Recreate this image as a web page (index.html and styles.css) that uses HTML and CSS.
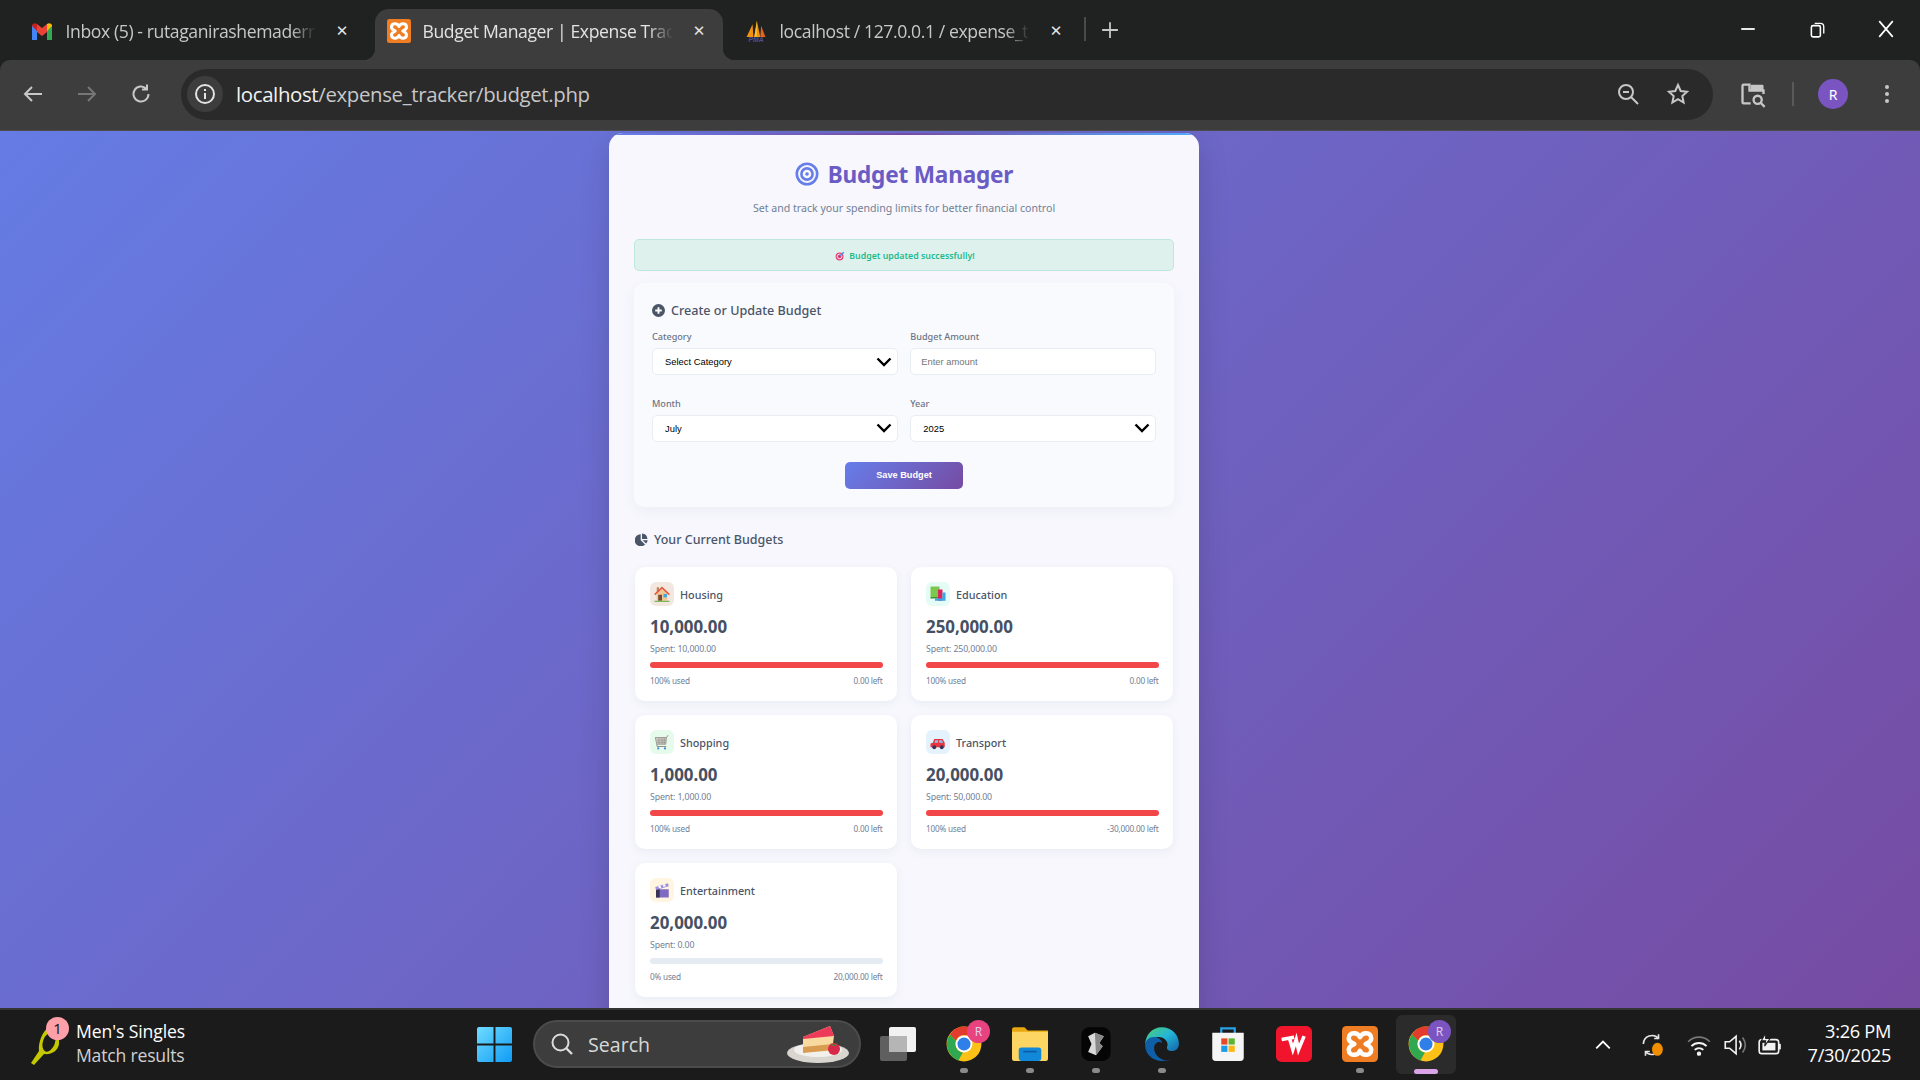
FILE: index.html
```html
<!DOCTYPE html>
<html lang="en">
<head>
    <meta charset="UTF-8">
    <meta name="viewport" content="width=device-width, initial-scale=1.0">
    <title>Budget Manager | Expense Tracker</title>
    <link rel="stylesheet" href="styles.css">
</head>
<body>
    <div class="tabstrip">
        <div class="tab">
            <svg class="favicon" viewBox="0 0 24 24"><path fill="#4285f4" d="M2 21V6l5 4v11z"/><path fill="#34a853" d="M22 21V6l-5 4v11z"/><path fill="#ea4335" d="M7 13V5l5 4 5-4v8l-5 4z"/><path fill="#fbbc04" d="M17 5q3-2 5 1v1l-5 5z"/><path fill="#c5221f" d="M7 5Q4 3 2 6v1l5 5z"/></svg>
            <span class="tab-title">Inbox (5) - rutaganirashemaderr</span>
            <span class="tab-close">✕</span>
        </div>
        <div class="tab tab-active">
            <svg class="favicon" viewBox="0 0 32 32"><rect width="32" height="32" rx="3" fill="#ef7d23"/><path fill="none" stroke="#fff" stroke-width="4" stroke-linejoin="round" d="M16 10C14 5 6 5 6 11c0 3 3 4 5 5-2 1-5 2-5 5 0 6 8 6 10 1 2 5 10 5 10-1 0-3-3-4-5-5 2-1 5-2 5-5 0-6-8-6-10-1z"/></svg>
            <span class="tab-title">Budget Manager | Expense Trac</span>
            <span class="tab-close">✕</span>
        </div>
        <div class="tab">
            <svg class="favicon" viewBox="0 0 24 28"><path fill="#f29111" d="M1 21 8 6l1 15zM10 21l3-19 4 19z"/><path fill="#e2661b" d="M17 21 18 8l5 13z"/><path fill="#fbc02d" d="M10 21l3-19v19z"/><text class="pma-text" x="12" y="27">PMA</text></svg>
            <span class="tab-title">localhost / 127.0.0.1 / expense_t</span>
            <span class="tab-close">✕</span>
        </div>
        <span class="tab-divider"></span>
        <svg class="new-tab" viewBox="0 0 16 16"><path d="M8 1v14M1 8h14" stroke="#c7c7c7" stroke-width="1.6"/></svg>
        <div class="window-btns">
            <svg viewBox="0 0 16 16"><path d="M2 8h12" stroke="#fff" stroke-width="1.6"/></svg>
            <svg viewBox="0 0 16 16"><rect x="3" y="5" width="8" height="10" rx="1.5" fill="none" stroke="#fff" stroke-width="1.4"/><path d="M6 3h5q3 0 3 3v6" fill="none" stroke="#fff" stroke-width="1.2"/></svg>
            <svg viewBox="0 0 16 16"><path d="M2 1l12 14M14 1 2 15" stroke="#fff" stroke-width="1.5"/></svg>
        </div>
    </div>

    <div class="toolbar">
        <svg class="tool-icon" viewBox="0 0 24 24"><path d="M21 12H4m7-7-7 7 7 7" fill="none" stroke="#c8c8c8" stroke-width="2"/></svg>
        <svg class="tool-icon" viewBox="0 0 24 24"><path d="M3 12h17m-7-7 7 7-7 7" fill="none" stroke="#777" stroke-width="2"/></svg>
        <svg class="tool-icon tool-reload" viewBox="0 0 24 24"><path d="M19.5 12a7.5 7.5 0 1 1-2.2-5.3M18 2.500v5h-5" fill="none" stroke="#c8c8c8" stroke-width="2"/></svg>
        <div class="omnibox">
            <span class="site-info"><svg viewBox="0 0 24 24"><circle cx="12" cy="12" r="9" fill="none" stroke="#e3e3e3" stroke-width="2"/><path d="M12 11v6M12 7v2" stroke="#e3e3e3" stroke-width="2"/></svg></span>
            <span class="url"><b>localhost</b>/expense_tracker/budget.php</span>
            <svg class="omni-icon" viewBox="0 0 24 24"><circle cx="10" cy="10" r="7" fill="none" stroke="#c7c7c7" stroke-width="2"/><path d="M15 15l7 7M7 10h6" stroke="#c7c7c7" stroke-width="2"/></svg>
            <svg class="omni-icon" viewBox="0 0 24 24"><path d="M12 3l2.700 6 6.300.7-4.700 4.300 1.300 6.500L12 17.200 6.400 20.500l1.300-6.500L3 9.700 9.300 9z" fill="none" stroke="#c7c7c7" stroke-width="2"/></svg>
        </div>
        <svg class="side-icon" viewBox="0 0 24 24"><path d="M10 20H4q-1 0-1-1V5q0-1 1-1h5v5h12v3" fill="none" stroke="#c7c7c7" stroke-width="2"/><rect x="10" y="4" width="11" height="5" rx="1" fill="#c7c7c7"/><circle cx="16" cy="17" r="3.500" fill="none" stroke="#c7c7c7" stroke-width="2"/><path d="M18.500 19.500 22 23" stroke="#c7c7c7" stroke-width="2"/></svg>
        <span class="toolbar-sep"></span>
        <span class="avatar">R</span>
        <svg class="menu-icon" viewBox="0 0 24 24"><circle cx="12" cy="5" r="2" fill="#c7c7c7"/><circle cx="12" cy="12" r="2" fill="#c7c7c7"/><circle cx="12" cy="19" r="2" fill="#c7c7c7"/></svg>
    </div>

    <main class="page">
        <div class="container">
            <header class="page-header">
                <h1>
                    <svg viewBox="0 0 24 24"><circle cx="12" cy="12" r="10.200" fill="none" stroke="#667eea" stroke-width="2.600"/><circle cx="12" cy="12" r="5.600" fill="none" stroke="#667eea" stroke-width="2.600"/><circle cx="12" cy="12" r="1.800" fill="#667eea"/></svg>
                    <span class="title-text">Budget Manager</span>
                </h1>
                <p>Set and track your spending limits for better financial control</p>
            </header>

            <div class="alert">
                <svg viewBox="0 0 24 24"><circle cx="11" cy="13" r="9.500" fill="#e8457a"/><circle cx="11" cy="13" r="5.500" fill="none" stroke="#fff" stroke-width="2"/><circle cx="11" cy="13" r="2" fill="#c92a5e"/><path d="M12 12 21 3" stroke="#3f8fe0" stroke-width="3.500"/></svg>
                Budget updated successfully!
            </div>

            <section class="form-panel">
                <h2>
                    <svg viewBox="0 0 24 24"><circle cx="12" cy="12" r="12" fill="#4a5568"/><path d="M12 6v12M6 12h12" stroke="#fff" stroke-width="3.500"/></svg>
                    Create or Update Budget
                </h2>
                <form class="form-grid">
                    <div class="field">
                        <label>Category</label>
                        <div class="control control-select">Select Category
                            <svg class="chev" viewBox="0 0 16 10"><path d="M1.500 1.500 8 8l6.500-6.500" fill="none" stroke="#000" stroke-width="2.400"/></svg>
                        </div>
                    </div>
                    <div class="field">
                        <label>Budget Amount</label>
                        <div class="control control-input">Enter amount</div>
                    </div>
                    <div class="field">
                        <label>Month</label>
                        <div class="control control-select">July
                            <svg class="chev" viewBox="0 0 16 10"><path d="M1.500 1.500 8 8l6.500-6.500" fill="none" stroke="#000" stroke-width="2.400"/></svg>
                        </div>
                    </div>
                    <div class="field">
                        <label>Year</label>
                        <div class="control control-select">2025
                            <svg class="chev" viewBox="0 0 16 10"><path d="M1.500 1.500 8 8l6.500-6.500" fill="none" stroke="#000" stroke-width="2.400"/></svg>
                        </div>
                    </div>
                </form>
                <div class="btn-row"><button class="btn-save" type="button">Save Budget</button></div>
            </section>

            <h2 class="budgets-title">
                <svg viewBox="0 0 24 24"><path fill="#4a5568" d="M10.500 2.500v11l8 7.500A11 11 0 1 1 10.500 2.500zM13 1a11 11 0 0 1 10 10H13zM14 13.500h9.500a11 11 0 0 1-3 6z"/></svg>
                Your Current Budgets
            </h2>

            <div class="budget-grid">
                <article class="budget-card">
                    <div class="budget-head">
                        <span class="cat-icon tint-house"><svg viewBox="0 0 24 24"><path fill="#b98a5e" d="M5 3h3v7H5z"/><path fill="#f0c896" d="M5 11l7-6 7 6v10H5z"/><path fill="#e8573f" d="M12 2 1.500 12l1.500 1.500 9-8.500 9 8.500 1.500-1.500z"/><path fill="#7a4a32" d="M7 13h5v8H7z"/><path fill="#38a6e8" d="M14 12h4.500v4.500H14z"/><path fill="#6ab04c" d="M2 21h20v1.500H2z"/></svg></span>
                        <span class="cat-name">Housing</span>
                    </div>
                    <div class="amount">10,000.00</div>
                    <div class="spent">Spent: 10,000.00</div>
                    <div class="track"><div class="fill fill-over" style="width: 100%"></div></div>
                    <div class="budget-foot"><span>100% used</span><span>0.00 left</span></div>
                </article>
                <article class="budget-card">
                    <div class="budget-head">
                        <span class="cat-icon tint-books"><svg viewBox="0 0 24 24"><path fill="#7cc84f" d="M2 2h12v14H2z"/><path fill="#3f8f35" d="M2 16h12v2H2z"/><path fill="#d8285a" d="M12 6h6v15h-6z"/><path fill="#38a6e8" d="M8 18h14v3H8zM18 10h4v8h-4z"/></svg></span>
                        <span class="cat-name">Education</span>
                    </div>
                    <div class="amount">250,000.00</div>
                    <div class="spent">Spent: 250,000.00</div>
                    <div class="track"><div class="fill fill-over" style="width: 100%"></div></div>
                    <div class="budget-foot"><span>100% used</span><span>0.00 left</span></div>
                </article>
                <article class="budget-card">
                    <div class="budget-head">
                        <span class="cat-icon tint-cart"><svg viewBox="0 0 24 24"><path fill="#cfccc3" stroke="#8f8c84" d="M3 6h15l-1 9H5z"/><path d="M5 9.500h12.500M5 12.500h12M8 6v9M12 6v9M15 6v9" stroke="#8f8c84" stroke-width=".8"/><path d="M18 6l2-3M5 15l.5 3h12" fill="none" stroke="#8f8c84" stroke-width="1.300"/><circle cx="7" cy="20.500" r="1.500" fill="#3f8fe0"/><circle cx="16" cy="20.500" r="1.500" fill="#3f8fe0"/></svg></span>
                        <span class="cat-name">Shopping</span>
                    </div>
                    <div class="amount">1,000.00</div>
                    <div class="spent">Spent: 1,000.00</div>
                    <div class="track"><div class="fill fill-over" style="width: 100%"></div></div>
                    <div class="budget-foot"><span>100% used</span><span>0.00 left</span></div>
                </article>
                <article class="budget-card">
                    <div class="budget-head">
                        <span class="cat-icon tint-car"><svg viewBox="0 0 24 24"><path fill="#e8343f" d="M2 14l3-1 2-5h11l3 5v6H2z"/><path fill="#7fc8f0" d="M8.500 9.500H12V13H7zM13.500 9.500H17l2 3.500h-5.500z"/><circle cx="7" cy="19" r="2.600" fill="#3b3355"/><circle cx="17" cy="19" r="2.600" fill="#3b3355"/></svg></span>
                        <span class="cat-name">Transport</span>
                    </div>
                    <div class="amount">20,000.00</div>
                    <div class="spent">Spent: 50,000.00</div>
                    <div class="track"><div class="fill fill-over" style="width: 100%"></div></div>
                    <div class="budget-foot"><span>100% used</span><span>-30,000.00 left</span></div>
                </article>
                <article class="budget-card">
                    <div class="budget-head">
                        <span class="cat-icon tint-film"><svg viewBox="0 0 24 24"><path fill="#7f6cc0" d="M4 11h17v11H4z"/><path fill="#3b3355" d="M4 11h5v11H4z"/><path fill="#a08fe0" d="M3 8l17-5 1 4-17 5z"/><path fill="#fff" d="M7 6.800l3-.9 1 3-3 .9zM13 5l3-.9 1 3-3 .9z"/></svg></span>
                        <span class="cat-name">Entertainment</span>
                    </div>
                    <div class="amount">20,000.00</div>
                    <div class="spent">Spent: 0.00</div>
                    <div class="track"></div>
                    <div class="budget-foot"><span>0% used</span><span>20,000.00 left</span></div>
                </article>
            </div>
        </div>
    </main>

    <footer class="taskbar">
        <div class="news">
            <svg class="news-icon" viewBox="0 0 36 40"><path d="M20 1C12 6 8 18 9 26L1 38l3 2 10-11c7 1 14-3 15-10 1-7-4-16-9-18z" fill="#c3c800"/><ellipse cx="19" cy="17" rx="6" ry="10" fill="#1b1b1b" transform="rotate(20 19 17)"/></svg>
            <span class="news-badge">1</span>
            <div class="news-text"><strong>Men's Singles</strong><span>Match results</span></div>
        </div>
        <div class="task-center">
            <svg class="win-logo" viewBox="0 0 36 36"><defs><linearGradient id="win" x1="0" y1="0" x2="1" y2="1"><stop offset="0" stop-color="#6fdcff"/><stop offset="1" stop-color="#0f9bf5"/></linearGradient></defs><path fill="url(#win)" d="M0 2q0-2 2-2h15v17H0zM19 0h15q2 0 2 2v15H19zM0 19h17v17H2q-2 0-2-2zM19 19h17v15q0 2-2 2H19z"/></svg>
            <div class="search-box">
                <svg viewBox="0 0 24 24"><circle cx="10.500" cy="10.500" r="8" fill="none" stroke="#dcdcdc" stroke-width="2"/><path d="M16.500 16.500 22 22" stroke="#dcdcdc" stroke-width="2.400"/></svg>
                <span>Search</span>
                <svg class="cake" viewBox="0 0 64 40"><ellipse cx="32" cy="29" rx="31" ry="10" fill="#d9d6d0"/><ellipse cx="32" cy="26" rx="24" ry="7" fill="#f2f0ec"/><path d="M17 13 44 2l4 10-2 15-29 1z" fill="#f8d9a0"/><path d="M17 13 44 2l4 10-31 3z" fill="#ee3a5a"/><path d="M17 23l30-3v6l-30 3z" fill="#d89b50"/><circle cx="48" cy="25" r="6" fill="#d8284a"/><path d="M44 19l4 2 4-2-3 3h-2z" fill="#3f8f35"/></svg>
            </div>
            <span class="task-app">
                <svg viewBox="0 0 36 36"><rect x="0" y="10" width="27" height="25" rx="2" fill="#5f5f5f"/><rect x="9" y="1" width="27" height="25" rx="2" fill="#f2f2f2"/><rect x="9" y="10" width="18" height="16" fill="#b5b5b5"/></svg>
            </span>
            <span class="task-app app-running">
                <svg viewBox="0 0 32 32"><use href="#chrome"/></svg>
                <span class="app-badge badge-pink">R</span>
            </span>
            <span class="task-app app-running">
                <svg viewBox="0 0 32 32"><path fill="#e8a70f" d="M0 3q0-2 2-2h9l3 3h18v3H0z"/><path fill="#fcd562" d="M0 5h32v24q0 2-2 2H2q-2 0-2-2z"/><rect x="6" y="19" width="20" height="12" rx="2.500" fill="#1288d8"/><rect x="10" y="22" width="12" height="1.500" fill="#0b5ca8"/></svg>
            </span>
            <span class="task-app app-running">
                <svg viewBox="0 0 32 32"><rect x="3" y="1" width="26" height="30" rx="7" fill="#050505"/><path fill="#d9d9d9" d="M9 9l6-3 8 3-4 6 3 3-6 8-7-3 3-7z"/><path fill="#888" d="M15 6l8 3-4 6 3 3-6 8z"/></svg>
            </span>
            <span class="task-app app-running">
                <svg viewBox="0 0 32 32"><defs><linearGradient id="edge" x1="0" y1="0" x2="1" y2="1"><stop offset="0" stop-color="#4fd06e"/><stop offset=".5" stop-color="#23b5d8"/><stop offset="1" stop-color="#1464a8"/></linearGradient></defs><path fill="url(#edge)" d="M16 1a15 15 0 0 1 15 15c0 5-4 7-8 6-3-1-3-3-2-5 0-5-5-8-10-7C5 11 1 14 1 17 1 8 7 1 16 1z"/><path fill="#0f5fa8" d="M1 17c0-5 5-8 10-7 3 1 5 3 5 5-3-2-7 0-7 5 0 4 3 8 8 10 4 1 8 0 11-4-3 4-7 5-12 5C8 31 1 25 1 17z"/></svg>
            </span>
            <span class="task-app">
                <svg viewBox="0 0 32 32"><path d="M10 7V2h12v5" fill="none" stroke="#2aa2e8" stroke-width="2"/><path fill="#f5f5f5" d="M2 6h28v22q0 3-3 3H5q-3 0-3-3z"/><rect x="10" y="11" width="5.500" height="5.500" fill="#e84a27"/><rect x="16.500" y="11" width="5.500" height="5.500" fill="#5bb531"/><rect x="10" y="17.500" width="5.500" height="5.500" fill="#1a9de8"/><rect x="16.500" y="17.500" width="5.500" height="5.500" fill="#fbb813"/></svg>
            </span>
            <span class="task-app">
                <svg viewBox="0 0 32 32"><rect width="32" height="32" rx="5" fill="#f0142d"/><path d="M5 12l11-2-4 1 3 10 3-9 2 9 5-12" fill="none" stroke="#fff" stroke-width="3.200"/></svg>
            </span>
            <span class="task-app app-running">
                <svg viewBox="0 0 32 32"><rect width="32" height="32" rx="4" fill="#ef7d23"/><path fill="none" stroke="#fff" stroke-width="4" stroke-linejoin="round" d="M16 10C14 5 6 5 6 11c0 3 3 4 5 5-2 1-5 2-5 5 0 6 8 6 10 1 2 5 10 5 10-1 0-3-3-4-5-5 2-1 5-2 5-5 0-6-8-6-10-1z"/></svg>
            </span>
            <span class="task-app app-active">
                <svg viewBox="0 0 32 32"><use href="#chrome"/></svg>
                <span class="app-badge badge-purple">R</span>
            </span>
        </div>
        <div class="tray">
            <svg class="tray-chevron" viewBox="0 0 16 16"><path d="M2 11l6-6 6 6" fill="none" stroke="#fff" stroke-width="1.600"/></svg>
            <svg class="tray-icon tray-sync" viewBox="0 0 24 24"><path d="M4 11a8 8 0 0 1 14-5m2 7a8 8 0 0 1-14 5" fill="none" stroke="#e6e6e6" stroke-width="1.500"/><path d="M18 2v4h-4M6 22v-4h4" fill="none" stroke="#e6e6e6" stroke-width="1.500"/><ellipse cx="17" cy="16" rx="5" ry="6" fill="#f18d00"/></svg>
            <svg class="tray-icon tray-wifi" viewBox="0 0 24 24"><path d="M2 9a14 14 0 0 1 20 0" fill="none" stroke="#777" stroke-width="1.600"/><path d="M5 13a10 10 0 0 1 14 0M8 16.500a6 6 0 0 1 8 0" fill="none" stroke="#f2f2f2" stroke-width="1.800"/><circle cx="12" cy="20" r="2" fill="#f2f2f2"/></svg>
            <svg class="tray-icon tray-sound" viewBox="0 0 24 24"><path d="M3 9h4l6-5v16l-6-5H3z" fill="none" stroke="#f2f2f2" stroke-width="1.500"/><path d="M16 8q3 4 0 8" fill="none" stroke="#f2f2f2" stroke-width="1.500"/><path d="M19 5q5 7 0 14" fill="none" stroke="#777" stroke-width="1.500"/></svg>
            <svg class="tray-icon" viewBox="0 0 24 24"><rect x="2" y="7" width="18" height="13" rx="2.500" fill="none" stroke="#f2f2f2" stroke-width="1.500"/><rect x="5" y="10" width="12" height="7" fill="#f2f2f2"/><path d="M21 11v5" stroke="#f2f2f2" stroke-width="2"/><path d="M8 1 4 8h4l-1 5 5-7H8z" fill="#f2f2f2" stroke="#1b1b1b"/></svg>
            <div class="clock"><span>3:26 PM</span><span>7/30/2025</span></div>
        </div>
        <svg class="svg-defs" viewBox="0 0 32 32"><defs><g id="chrome"><circle cx="16" cy="16" r="15.500" fill="#fbc116"/><path fill="#e33b2e" d="M16 .5a15.500 15.500 0 0 1 13.400 7.800H16a7.500 7.500 0 0 0-7 4.800L3.500 7.500A15.500 15.500 0 0 1 16 .5z"/><path fill="#2fa84f" d="M3.500 7.500 9 13.100a7.500 7.500 0 0 0 6 10.400L11 30.700A15.500 15.500 0 0 1 3.500 7.500z"/><circle cx="16" cy="16" r="7.500" fill="#fff"/><circle cx="16" cy="16" r="5.800" fill="#2f7fe8"/></g></defs></svg>
    </footer>
</body>
</html>
```

FILE: styles.css
```css
* {
    box-sizing: border-box;
}

html, body {
    margin: 0;
    height: 100%;
}

body {
    display: flex;
    flex-direction: column;
    height: 100vh;
    overflow: hidden;
    font-family: 'Noto Sans', 'Open Sans', sans-serif;
    background-color: #202222;
}

/* browser chrome */
.tabstrip {
    display: flex;
    align-items: flex-end;
    height: 60px;
    flex-shrink: 0;
    padding-left: 13.500px;
    background-color: #202222;
}

.tab {
    position: relative;
    display: flex;
    align-items: center;
    width: 348px;
    height: 51px;
    margin: 0 4.500px;
    padding: 0 12px 7px;
    color: #c7c7c7;
    font-size: 17.600px;
}

.tab-active {
    background-color: #3d3d3d;
    border-radius: 14px 14px 0 0;
    color: #e3e3e3;
}

.tab-active::before,
.tab-active::after {
    content: '';
    position: absolute;
    bottom: 0;
    width: 12px;
    height: 12px;
}

.tab-active::before {
    left: -12px;
    background: radial-gradient(circle at 0 0, transparent 12px, #3d3d3d 12.500px);
}

.tab-active::after {
    right: -12px;
    background: radial-gradient(circle at 100% 0, transparent 12px, #3d3d3d 12.500px);
}

.favicon {
    width: 24px;
    height: 24px;
    flex-shrink: 0;
    margin-right: 11.500px;
}

.pma-text {
    fill: #4a4f9a;
    font-family: 'Liberation Sans', sans-serif;
    font-size: 8px;
    font-style: italic;
    font-weight: 700;
    text-anchor: middle;
}

.tab-title {
    flex: 1;
    overflow: hidden;
    white-space: nowrap;
    font-family: 'Open Sans', sans-serif;
    letter-spacing: -0.4px;
    -webkit-mask-image: linear-gradient(90deg, #000 90%, transparent);
    mask-image: linear-gradient(90deg, #000 90%, transparent);
}

.tab-close {
    width: 24px;
    margin-left: 14px;
    color: #e3e3e3;
    font-family: 'DejaVu Sans', sans-serif;
    font-size: 15px;
    font-weight: 700;
    text-align: center;
}

.tab-divider {
    width: 2px;
    height: 24px;
    margin: 0 0 19px -1px;
    background-color: #4a4a4a;
}

.new-tab {
    width: 18px;
    height: 18px;
    margin: 0 0 21px 15px;
}

.window-btns {
    display: flex;
    gap: 51px;
    margin-left: auto;
    padding: 0 25px 22px 0;
}

.window-btns svg {
    width: 18px;
    height: 18px;
}

.toolbar {
    display: flex;
    align-items: center;
    height: 71px;
    flex-shrink: 0;
    padding: 0 0 2px 21px;
    background-color: #3d3d3d;
    border-radius: 10px 10px 0 0;
    border-bottom: 1px solid #4c4c4c;
}

.tool-icon {
    width: 24px;
    height: 24px;
    margin-right: 30px;
    flex-shrink: 0;
}

.tool-reload {
    margin-right: 28px;
}

.omnibox {
    display: flex;
    align-items: center;
    width: 1532px;
    height: 51px;
    flex-shrink: 0;
    padding: 0 23px 0 6px;
    background-color: #2a2a2a;
    border-radius: 26px;
}

.site-info {
    display: flex;
    align-items: center;
    justify-content: center;
    width: 36px;
    height: 36px;
    margin-right: 13px;
    background-color: #3d3d3d;
    border-radius: 50%;
}

.site-info svg {
    width: 24px;
    height: 24px;
}

.url {
    flex: 1;
    color: #c7c7c7;
    font-family: 'Open Sans', sans-serif;
    font-size: 20.400px;
    letter-spacing: -0.350px;
}

.url b {
    color: #f1f1f1;
    font-weight: 400;
}

.omni-icon {
    width: 24px;
    height: 24px;
    margin-left: 26px;
}

.side-icon {
    width: 28px;
    height: 28px;
    flex-shrink: 0;
    margin-left: 26px;
}

.toolbar-sep {
    width: 2px;
    height: 24px;
    flex-shrink: 0;
    margin: 0 24px 0 25px;
    background-color: #5a5a5a;
}

.avatar {
    display: flex;
    align-items: center;
    justify-content: center;
    width: 30px;
    height: 30px;
    flex-shrink: 0;
    background-color: #7a55c2;
    border-radius: 50%;
    color: #fff;
    font-size: 14px;
}

.menu-icon {
    width: 24px;
    height: 24px;
    flex-shrink: 0;
    margin-left: 27px;
}

/* page */
.page {
    flex: 1;
    min-height: 0;
    display: flex;
    padding-left: 609px;
    overflow: hidden;
    background: linear-gradient(135deg, #657ce4 0%, #764ba2 100%);
}

.container {
    position: relative;
    width: 590px;
    height: 1100px;
    flex-shrink: 0;
    margin-top: 2px;
    padding: 27px 25px 0;
    background-color: #f7f7fd;
    border-radius: 14px 14px 0 0;
    box-shadow: 0 10px 30px rgba(0, 0, 0, 0.15);
    overflow: hidden;
}

.container::before {
    content: '';
    position: absolute;
    top: 0;
    left: 0;
    right: 0;
    height: 2px;
    background: linear-gradient(90deg, #667eea, #764ba2, #4facfe);
}

.page-header {
    text-align: center;
}

.page-header h1 {
    display: flex;
    align-items: center;
    justify-content: center;
    gap: 9px;
    margin: 0;
    height: 28px;
    font-size: 22.600px;
    font-weight: 700;
    letter-spacing: -0.2px;
}

.page-header h1 svg {
    width: 24px;
    height: 24px;
}

.title-text {
    color: #6a5cc4;
}

.page-header p {
    margin: 12px 0 0 0;
    height: 16px;
    color: #718096;
    font-size: 10.600px;
    line-height: 16px;
}

.alert {
    display: flex;
    align-items: center;
    justify-content: center;
    gap: 4px;
    height: 32px;
    margin-top: 23px;
    padding: 2px 0 0 2px;
    background-color: #dff1ed;
    border: 1px solid #bde7dc;
    border-radius: 5px;
    color: #1fbb8b;
    font-size: 8.800px;
    font-weight: 600;
}

.alert svg {
    width: 10px;
    height: 10px;
}

.form-panel {
    height: 224px;
    margin-top: 12px;
    padding: 17px 18px 0;
    background-color: #f9fafd;
    border-radius: 10px;
    box-shadow: 0 4px 14px rgba(90, 90, 140, 0.06);
}

.form-panel h2,
.budgets-title {
    display: flex;
    align-items: center;
    gap: 6px;
    margin: 0;
    height: 20px;
    color: #4a5568;
    font-size: 12.600px;
    font-weight: 500;
}

.form-panel h2 svg,
.budgets-title svg {
    width: 13px;
    height: 13px;
}

.form-grid {
    display: grid;
    grid-template-columns: 1fr 1fr;
    column-gap: 12.500px;
    row-gap: 21.500px;
    margin-top: 10px;
}

.field label {
    display: block;
    height: 14px;
    margin-bottom: 4px;
    color: #6b7486;
    font-size: 9.100px;
    font-weight: 500;
    line-height: 14px;
}

.control {
    display: flex;
    align-items: center;
    justify-content: space-between;
    height: 27px;
    padding: 0 5px 0 12px;
    background-color: #fff;
    border: 1.500px solid #e8edf5;
    border-radius: 5px;
    color: #000;
    font-family: 'Liberation Sans', Arial, sans-serif;
    font-size: 9.400px;
}

.control-input {
    padding-left: 10px;
    color: #757575;
}

.chev {
    width: 16px;
    height: 10px;
}

.btn-row {
    display: flex;
    justify-content: center;
    margin-top: 20px;
}

.btn-save {
    width: 118px;
    height: 27px;
    background: linear-gradient(135deg, #667eea, #764ba2);
    border: none;
    border-radius: 5px;
    color: #fff;
    font-family: 'Liberation Sans', Arial, sans-serif;
    font-size: 9.200px;
    font-weight: 700;
}

.budgets-title {
    margin-top: 22px;
    padding-left: 1px;
    font-size: 12.500px;
}

.budget-grid {
    display: grid;
    grid-template-columns: 262px 262px;
    grid-auto-rows: 134px;
    column-gap: 14px;
    row-gap: 14px;
    margin-top: 18px;
    padding-left: 1px;
}

.budget-card {
    padding: 15px 14.500px 15px 15px;
    background-color: #fff;
    border-radius: 10px;
    box-shadow: 0 3px 10px rgba(90, 90, 140, 0.07);
}

.budget-head {
    display: flex;
    align-items: center;
    gap: 6px;
    height: 24px;
}

.cat-icon {
    display: flex;
    align-items: center;
    justify-content: center;
    width: 24px;
    height: 24px;
    border-radius: 6px;
}

.cat-icon svg {
    width: 18px;
    height: 18px;
}

.tint-house { background-color: #f2e8e0; }
.tint-books { background-color: #e4fbf6; }
.tint-cart { background-color: #e6fbec; }
.tint-car { background-color: #e3f2fd; }
.tint-film { background-color: #fff5e0; }

.cat-name {
    color: #4a5568;
    font-size: 10.800px;
    font-weight: 500;
}

.amount {
    height: 22px;
    margin-top: 10px;
    color: #465063;
    font-size: 16.900px;
    font-weight: 700;
    line-height: 22px;
}

.spent {
    height: 13px;
    margin-top: 4.500px;
    color: #718096;
    font-size: 8.800px;
    line-height: 13px;
    letter-spacing: -0.15px;
}

.track {
    height: 6px;
    margin-top: 6.500px;
    background-color: #e5ebf3;
    border-radius: 3px;
    overflow: hidden;
}

.fill {
    height: 100%;
}

.fill-over {
    background-color: #f14748;
}

.budget-foot {
    display: flex;
    justify-content: space-between;
    margin-top: 7px;
    color: #718096;
    font-size: 8.200px;
    line-height: 12px;
    letter-spacing: -0.2px;
}

/* taskbar */
.taskbar {
    position: relative;
    display: flex;
    align-items: center;
    height: 72px;
    flex-shrink: 0;
    background-color: #1b1b1b;
    border-top: 2px solid #343434;
}

.news {
    position: relative;
    display: flex;
    align-items: center;
    width: 477px;
    flex-shrink: 0;
    padding-left: 30px;
}

.news-icon {
    width: 36px;
    height: 40px;
    flex-shrink: 0;
}

.news-badge {
    position: absolute;
    top: -2px;
    left: 46px;
    width: 23px;
    height: 23px;
    background-color: #ffa0a8;
    border-radius: 50%;
    color: #1b1b1b;
    font-size: 15px;
    line-height: 23px;
    text-align: center;
}

.news-text {
    display: flex;
    flex-direction: column;
    margin: 0 0 4px 10px;
    font-family: 'Open Sans', sans-serif;
    font-size: 17.600px;
    line-height: 24px;
    letter-spacing: -0.2px;
}

.news-text strong {
    color: #fff;
    font-weight: 400;
    letter-spacing: -0.1px;
}

.news-text span {
    color: #d0d0d0;
}

.task-center {
    display: flex;
    align-items: center;
    margin-bottom: 2px;
}

.win-logo {
    width: 35px;
    height: 35px;
    flex-shrink: 0;
}

.search-box {
    display: flex;
    align-items: center;
    width: 328px;
    height: 48px;
    margin: 0 4px 0 21px;
    padding: 0 9px 0 15px;
    background-color: #3d3d3d;
    border: 2px solid #4b4b4b;
    border-radius: 24px;
    color: #d8d8d8;
    font-family: 'Open Sans', sans-serif;
    font-size: 19.600px;
}

.search-box svg {
    width: 24px;
    height: 24px;
    flex-shrink: 0;
}

.search-box span {
    margin-left: 14px;
}

.search-box .cake {
    width: 64px;
    height: 40px;
    margin-left: auto;
}

.task-app {
    position: relative;
    display: flex;
    align-items: center;
    justify-content: center;
    width: 66px;
    height: 59px;
}

.task-app svg {
    width: 36px;
    height: 36px;
}

.app-running::after,
.app-active::after {
    content: '';
    position: absolute;
    bottom: 1px;
    left: 29px;
    width: 8px;
    height: 5px;
    background-color: #8a8a8a;
    border-radius: 3px;
}

.app-active {
    background-color: #2b2b2b;
    border-radius: 6px;
    width: 60px;
    margin-left: 3px;
}

.app-active::after {
    bottom: 0;
    left: 18px;
    width: 24px;
    background-color: #dba4e8;
}

.app-badge {
    position: absolute;
    top: 5px;
    left: 36px;
    width: 23px;
    height: 23px;
    border-radius: 50%;
    color: #e0c9e8;
    font-size: 12px;
    line-height: 23px;
    text-align: center;
}

.badge-pink {
    background-color: #e8437e;
}

.badge-purple {
    background-color: #7a55c2;
    left: 32px;
}

.tray {
    display: flex;
    align-items: center;
    margin-left: auto;
    padding-right: 29px;
}

.tray-chevron {
    width: 18px;
    height: 18px;
    margin-right: 26.500px;
}

.tray-icon {
    width: 26px;
    height: 26px;
}

.tray-sync {
    margin-right: 21.500px;
}

.tray-wifi {
    margin-right: 10px;
}

.tray-sound {
    margin-right: 9px;
}

.clock {
    display: flex;
    flex-direction: column;
    align-items: flex-end;
    width: 84px;
    margin: 0 0 4px 24px;
    color: #fff;
    font-family: 'Open Sans', sans-serif;
    font-size: 18.200px;
    line-height: 24px;
    letter-spacing: -0.3px;
    white-space: nowrap;
}

.svg-defs {
    position: absolute;
    width: 0;
    height: 0;
}
```
